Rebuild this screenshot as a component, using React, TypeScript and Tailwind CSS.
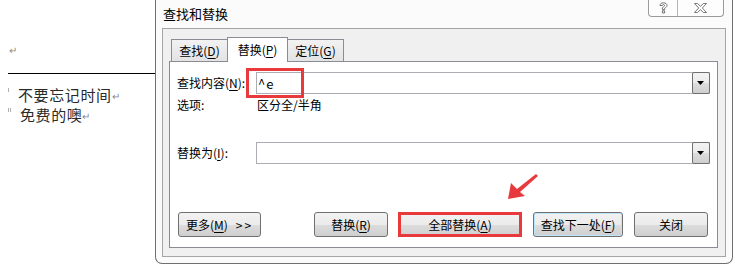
import React from "react";

const U = ({ c }: { c: string }) => <span className="underline underline-offset-[2px] decoration-[1px]">{c}</span>;

function Btn({ w, children, extra = "" }: { w: string; children: React.ReactNode; extra?: string }) {
  return (
    <div
      className={`relative h-[25px] ${w} shrink-0 rounded-[3px] border border-[#707070] bg-[linear-gradient(#f2f2f2_0%,#ebebeb_50%,#dddddd_50%,#cfcfcf_100%)] flex items-center justify-center text-[12px] text-black ${extra}`}
    >
      {children}
    </div>
  );
}

function Combo({ value }: { value?: string }) {
  return (
    <div className="relative flex-1 h-[22px] border border-[#abadb3] border-r-0 bg-white flex items-center">
      <span className="pl-[1px] text-[13px] text-black leading-none tracking-[1px]">{value}</span>
      <div className="ml-auto h-[22px] w-[18px] -mt-px -mb-px border border-[#707070] rounded-[2px] bg-[linear-gradient(#f3f3f3_0%,#ebebeb_50%,#dddddd_50%,#cfcfcf_100%)] flex items-center justify-center">
        <svg width="8" height="5" viewBox="0 0 8 5"><path d="M0 0 H7 L3.5 4 Z" fill="#000" /></svg>
      </div>
    </div>
  );
}

export default function App() {
  return (
    <div className="relative w-[735px] h-[265px] bg-white overflow-hidden flex font-['Noto_Sans_CJK_SC','Noto_Sans',sans-serif]">
      {/* document */}
      <div className="w-[155px] shrink-0 pt-[44px]">
        <div className="pl-[9px] h-[12px] leading-[12px] text-[10px] text-[#8a8a8a]">↵</div>
        <div className="ml-[8px] mt-[17px] border-t border-black w-[160px]" />
        <div className="mt-[11px] flex items-center h-[20px] text-[15px] tracking-[0.6px] text-[#2a2a2a]">
          <span className="ml-[8px] w-[10px] shrink-0 h-[20px] relative">
            <span className="absolute left-0 top-[3px] w-px h-[4px] bg-[#b0b0b0]" />
          </span>
          <span>不要忘记时间</span>
          <span className="text-[10px] text-[#888]">↵</span>
        </div>
        <div className="flex items-center h-[20px] text-[15px] tracking-[0.6px] text-[#2a2a2a]">
          <span className="ml-[8px] w-[12px] shrink-0 h-[20px] relative">
            <span className="absolute left-0 top-[3px] w-px h-[4px] bg-[#b0b0b0]" />
            <span className="absolute left-[2px] top-[3px] w-px h-[4px] bg-[#b0b0b0]" />
          </span>
          <span>免费的噢</span>
          <span className="text-[10px] text-[#888]">↵</span>
        </div>
      </div>

      {/* dialog */}
      <div className="relative w-[578px] h-[264px] shrink-0 border-l border-r border-b border-[#6f6f6f] rounded-bl-[7px] rounded-br-[7px] bg-[#fbfbfb] flex flex-col">
        <div className="relative h-[28px] shrink-0 flex items-center pl-[7px] text-[13px] text-black">
          查找和替换
          <div className="absolute top-0 right-[8px] h-[17px] flex border border-t-0 border-[#9a9a9a] rounded-bl-[4px] rounded-br-[4px] bg-[#fdfdfd]">
            <div className="w-[29px] flex items-center justify-center border-r border-[#b5b5b5]">
              <svg width="9" height="12" viewBox="0 0 9 12">
                <path d="M1 3.5 C1 1.5 2.5 0.8 4.5 0.8 C6.5 0.8 8 1.8 8 3.5 C8 5 6.5 5.6 5.6 6.3 L5.6 7.6 L3.4 7.6 L3.4 5.8 C3.4 5 5.6 4.6 5.6 3.5 C5.6 2.8 5 2.5 4.5 2.5 C3.8 2.5 3.3 2.9 3.3 3.5 Z M3.4 8.8 H5.6 V11 H3.4 Z" fill="#fff" stroke="#555" strokeWidth="0.8" />
              </svg>
            </div>
            <div className="w-[45px] flex items-center justify-center">
              <svg width="13" height="10" viewBox="0 0 13 10">
                <path d="M0.5 0.5 H3.5 L6.5 3.2 L9.5 0.5 H12.5 L8.3 5 L12.5 9.5 H9.5 L6.5 6.8 L3.5 9.5 H0.5 L4.7 5 Z" fill="#fff" stroke="#555" strokeWidth="0.8" />
              </svg>
            </div>
          </div>
        </div>

        <div className="mx-[6px] h-[229px] border border-[#a5a5a5] bg-[#f0f0f0] pl-[6px] pr-[7px] pt-[8px] flex flex-col">
          {/* tabs */}
          <div className="h-[24px] flex items-end pl-[2px] text-[12px] text-black">
            <div className="h-[22px] w-[57px] border border-b-0 border-[#898c95] bg-[linear-gradient(#f2f2f2,#e3e3e3)] flex items-center justify-center -mr-px">
              查找(<U c="D" />)
            </div>
            <div className="relative z-10 h-[25px] w-[61px] -mb-px border border-b-0 border-[#898c95] bg-white flex items-start justify-center pt-[3px]">
              替换(<U c="P" />)
            </div>
            <div className="h-[22px] w-[57px] border border-b-0 border-[#898c95] bg-[linear-gradient(#f2f2f2,#e3e3e3)] flex items-center justify-center -ml-px">
              定位(<U c="G" />)
            </div>
          </div>

          {/* panel */}
          <div className="relative h-[187px] border border-[#898c95] bg-white pr-[7px] text-[12px] text-black">
            <div className="mt-[10px] h-[22px] flex items-center">
              <span className="pl-[7px] w-[86px] shrink-0">查找内容(<U c="N" />):</span>
              <Combo value="^e" />
            </div>
            <div className="mt-[2px] h-[18px] flex items-center">
              <span className="pl-[7px] w-[87px] shrink-0">选项:</span>
              <span>区分全/半角</span>
            </div>
            <div className="mt-[28px] h-[22px] flex items-center">
              <span className="pl-[7px] w-[86px] shrink-0">替换为(<U c="I" />):</span>
              <Combo />
            </div>
            <div className="mt-[48px] flex items-center pl-[8px]">
              <Btn w="w-[83px]">
                更多(<U c="M" />)<span className="ml-[8px] tracking-[2px]">&gt;&gt;</span>
              </Btn>
              <Btn w="w-[74px]" extra="ml-[53px]">
                替换(<U c="R" />)
              </Btn>
              <Btn w="w-[122px]" extra="ml-[11px]">
                全部替换(<U c="A" />)
                <span className="absolute -left-[2px] -right-[2px] -top-[1px] -bottom-[1px] border-[3px] border-[#e8393d]" />
              </Btn>
              <Btn w="w-[90px]" extra="ml-[12px] border-[#3c7fb1] shadow-[inset_0_0_0_1px_#bde6fd]">
                查找下一处(<U c="F" />)
              </Btn>
              <Btn w="w-[74px]" extra="ml-[11px]">关闭</Btn>
            </div>
            {/* red highlight box around find input */}
            <span className="absolute left-[76px] top-[6px] w-[58px] h-[30px] border-[3px] border-[#e8393d]" />
          </div>
        </div>
      </div>

      {/* red arrow annotation */}
      <svg className="absolute left-0 top-0 pointer-events-none" width="735" height="265" viewBox="0 0 735 265">
        <polygon points="508,199 511,183 517,189 536,174 538,176 520,192 525,196" fill="#e8393d" />
      </svg>
    </div>
  );
}
